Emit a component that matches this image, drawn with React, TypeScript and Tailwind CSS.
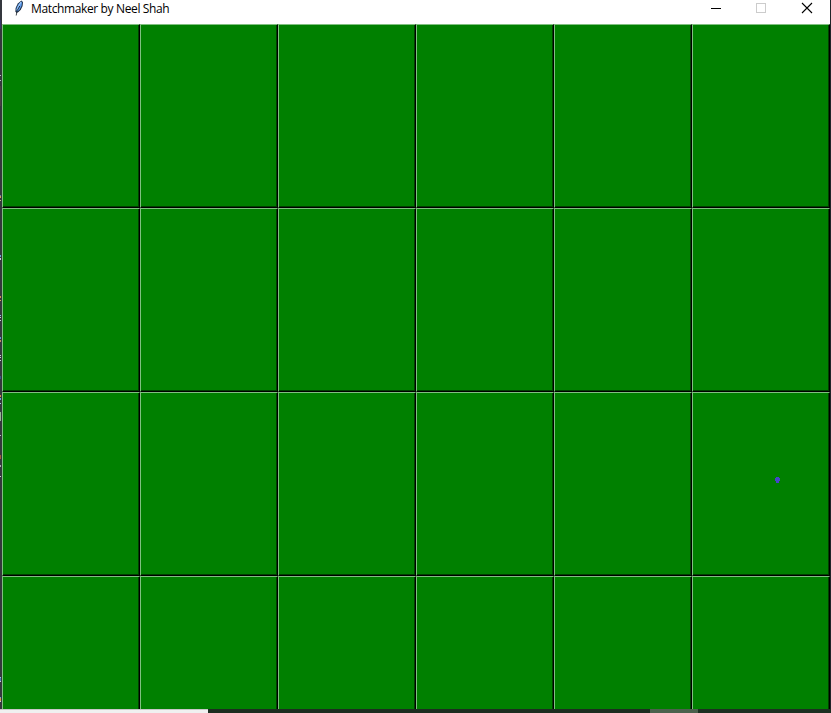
const cells = Array.from({ length: 24 }, (_, i) => i);

// Slivers of the editor window showing beside the game window: [top, height, colour]
const slivers: [number, number, string][] = [
  [20, 9, '#34346a'], [75, 1, '#b5bac4'], [80, 1, '#b5bac4'], [86, 20, '#4a3f43'],
  [195, 1, '#6685a8'], [196, 2, '#d29a62'], [200, 1, '#c8b48a'],
  [255, 2, '#6aa5d8'], [258, 2, '#c4ccd4'], [296, 2, '#d18a55'], [300, 1, '#d9a25e'],
  [315, 1, '#8fc0e8'], [317, 1, '#c9ced6'], [320, 1, '#c9ced6'],
  [337, 2, '#5d95d0'], [340, 2, '#c08a60'], [355, 1, '#c9ced6'], [357, 1, '#c9ced6'], [360, 1, '#c9ced6'],
  [376, 3, '#385488'], [395, 2, '#d18a55'], [398, 2, '#6aa5d8'], [403, 1, '#a7cfe8'],
  [412, 9, '#93b793'], [435, 1, '#b5bac4'], [455, 4, '#a05a3c'], [465, 2, '#a8a8b0'], [476, 1, '#c9ced6'],
  [677, 1, '#8fc0e8'], [678, 3, '#527fbd'], [681, 1, '#c9ced6'],
  [697, 1, '#6aa5d8'], [698, 3, '#d2a050'], [701, 1, '#c9ced6'],
];

function Feather() {
  return (
    <svg width="11" height="17" viewBox="0 0 11 17" className="block">
      <path d="M8.5 .5L10 2.2L9.6 6L7.8 9.8L5.5 12L3.5 13L2.4 11.5L2.6 8L4.8 3.5Z" fill="#1d2c42" />
      <path d="M8.3 1.3L9 3L8.5 6L6.8 9.2L4.8 11.3L3.4 11.5L3.5 8L5.5 4Z" fill="#5d9cec" />
      <path d="M8 2L5.4 6.5L4 10" stroke="#b5d5f8" strokeWidth=".9" fill="none" />
      <path d="M6.8 6L4.2 10.5L3.2 15.5" stroke="#111820" strokeWidth=".8" fill="none" />
    </svg>
  );
}

function TitleBar() {
  return (
    <header className="flex h-6 shrink-0 overflow-hidden bg-white">
      <div className="w-[11px]" />
      <Feather />
      <h1 className="ml-[7px] mt-px h-4 grow whitespace-nowrap font-['Open_Sans','Noto_Sans',sans-serif] text-[12px] font-normal leading-4 tracking-[-0.37px] text-black">
        Matchmaker by Neel Shah
      </h1>
      <svg width="120" height="17" viewBox="0 0 120 17" className="block" fill="none" shapeRendering="crispEdges">
        <path d="M1 8.5H11" stroke="#000" />
        <rect x="46.5" y="3.5" width="9" height="9" stroke="#ccc" />
        <path d="M92 3L102 13M102 3L92 13" stroke="#000" strokeWidth="1.1" shapeRendering="auto" />
      </svg>
    </header>
  );
}

export default function App() {
  return (
    <div className="flex h-[713px] w-[831px] flex-col overflow-hidden bg-[#15241a]">
      <div className="flex h-[709px]">
        <aside className="relative w-[2px] shrink-0 bg-[#34373d]">
          {slivers.map(([top, height, background]) => (
            <i key={top} className="absolute left-0 w-px" style={{ top, height, background }} />
          ))}
        </aside>
        <main className="flex w-[828px] flex-col overflow-hidden">
          <TitleBar />
          <div className="grid shrink-0 grid-cols-6 auto-rows-[184px]">
            {cells.map((i) => (
              <button
                key={i}
                aria-label={`Card ${i + 1}`}
                className="relative block border border-t-[#80c080] border-l-[#80c080] border-r-black border-b-black bg-[#008000] shadow-[inset_-1px_-1px_0_#004000]"
              >
                {i === 17 && (
                  <svg width="5" height="6" viewBox="0 0 5 6" className="absolute left-[82px] top-[84px]">
                    <path d="M1 0H4V1H5V4H4V6H1V4H0V1H1Z" fill="#4545c8" />
                  </svg>
                )}
              </button>
            ))}
          </div>
        </main>
        <div className="w-px shrink-0 bg-[#202428]" />
      </div>
      <footer className="flex h-1">
        <div className="w-[208px] border-t border-[#c8c8c8] bg-[#f0f0f0]" />
        <div className="w-[442px] bg-[#1c2d20]" />
        <div className="w-[48px] bg-[#4b614d]" />
        <div className="grow bg-[#1c2f21]" />
      </footer>
    </div>
  );
}
